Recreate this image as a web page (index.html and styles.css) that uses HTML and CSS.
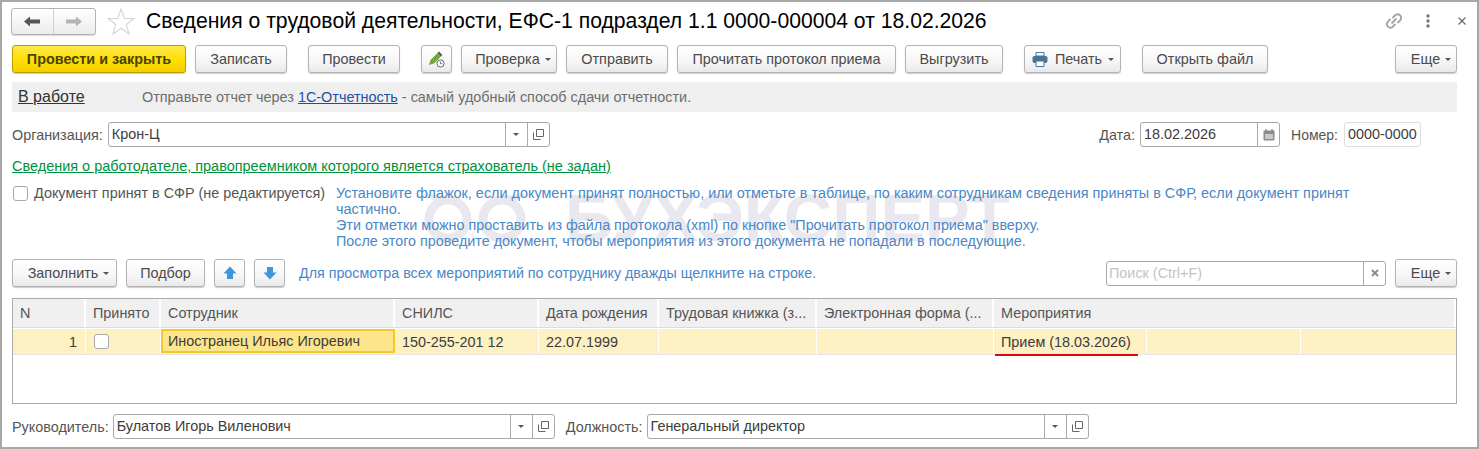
FILE: index.html
```html
<!DOCTYPE html>
<html lang="ru">
<head>
<meta charset="utf-8">
<title>ЕФС-1</title>
<link rel="stylesheet" href="styles.css">
</head>
<body>
<div class="frame">
  <div class="watermark" aria-hidden="true">
    <svg class="wm-logo" width="110" height="56" viewBox="0 0 110 56"><circle cx="28" cy="29" r="19" fill="none" stroke="#e8e8ee" stroke-width="9"/><circle cx="82" cy="29" r="19" fill="none" stroke="#e8e8ee" stroke-width="9"/><path d="M4 4 L30 6 L20 15 Z M106 4 L80 6 L90 15 Z" fill="#e8e8ee"/></svg>
    <span>БУХЭКСПЕРТ</span>
  </div>

  <header class="title-row">
    <div class="nav-group">
      <button class="nav-btn"><svg width="17" height="11" viewBox="0 0 17 11"><path d="M0 5.5 L6 0.5 V3.5 H16 V7.5 H6 V10.5 Z" fill="#555"/></svg></button>
      <button class="nav-btn"><svg width="17" height="11" viewBox="0 0 17 11"><path d="M16 5.5 L10 0.5 V3.5 H0 V7.5 H10 V10.5 Z" fill="#b5b5b5"/></svg></button>
    </div>
    <svg class="star" width="28" height="27" viewBox="0 0 28 27"><path d="M14 1 L17.3 10.4 L27 10.6 L19.2 16.5 L22 26 L14 20.3 L6 26 L8.8 16.5 L1 10.6 L10.7 10.4 Z" fill="#fff" stroke="#d4d8da" stroke-width="1.2"/></svg>
    <h1 class="title">Сведения о трудовой деятельности, ЕФС-1 подраздел 1.1 0000-000004 от 18.02.2026</h1>
    <div class="win-tools">
      <svg width="20" height="20" viewBox="0 0 20 20" fill="none" stroke="#a4a4a4" stroke-width="1.8"><path d="M8.5 7 L11.5 4 a3.6 3.6 0 0 1 5 5 L13.5 12"/><path d="M11.5 13 L8.5 16 a3.6 3.6 0 0 1 -5 -5 L6.5 8"/><path d="M7.5 12.5 L12.5 7.5"/></svg>
      <svg class="dots" width="6" height="14" viewBox="0 0 6 14"><circle cx="3" cy="2" r="1.7" fill="#777"/><circle cx="3" cy="7" r="1.7" fill="#777"/><circle cx="3" cy="12" r="1.7" fill="#777"/></svg>
      <svg class="close" width="8" height="8" viewBox="0 0 8 8"><path d="M0.5 0.5 L7.5 7.5 M7.5 0.5 L0.5 7.5" stroke="#666" stroke-width="1.1"/></svg>
    </div>
  </header>

  <div class="toolbar main-bar">
    <button class="btn primary w-post-close">Провести и закрыть</button>
    <button class="btn w-save">Записать</button>
    <button class="btn w-save sep">Провести</button>
    <button class="btn icon sep">
      <svg width="17" height="17" viewBox="0 0 17 17"><path d="M1 14 L2.5 9 L9.5 2 L13 5.5 L6 12.5 Z" fill="#6fa83a"/><path d="M9.5 2 L11 .6 L14.4 4 L13 5.5 Z" fill="#555"/><circle cx="12.5" cy="12.5" r="3.6" fill="#fff" stroke="#667" stroke-width="1"/><path d="M12.5 10.5 V12.7 H14.3" stroke="#667" fill="none" stroke-width=".9"/></svg>
    </button>
    <button class="btn w-check">Проверка<i class="caret"></i></button>
    <button class="btn w-send">Отправить</button>
    <button class="btn w-read">Прочитать протокол приема</button>
    <button class="btn w-export">Выгрузить</button>
    <button class="btn w-print sep">
      <svg class="print-ico" width="16" height="15" viewBox="0 0 16 15"><path d="M4 0.5 H12 V4 H4 Z" fill="#fff" stroke="#4a7396"/><rect x="0.5" y="4" width="15" height="7" rx="2" fill="#4a7396"/><path d="M4 9 H12 V14.5 H4 Z" fill="#fff" stroke="#4a7396"/></svg>
      Печать<i class="caret"></i>
    </button>
    <button class="btn w-open sep">Открыть файл</button>
    <button class="btn w-more push">Еще<i class="caret"></i></button>
  </div>

  <div class="status-bar">
    <a class="status-link" href="#">В работе</a>
    <span class="status-note">Отправьте отчет через <a class="blue-link" href="#">1С-Отчетность</a> - самый удобный способ сдачи отчетности.</span>
  </div>

  <div class="field-row org-row">
    <label class="lbl">Организация:</label>
    <div class="field w-org"><span class="val">Крон-Ц</span><span class="cell"><i class="caret dark"></i></span><span class="cell"><svg class="open-ico" width="11" height="11" viewBox="0 0 11 11"><path d="M3.5 .5 H10.5 V7.5 H3.5 Z" fill="none" stroke="#666"/><path d="M.5 3.5 V10.5 H7.5" fill="none" stroke="#666"/></svg></span></div>
    <label class="lbl push">Дата:</label>
    <div class="field w-date"><span class="val">18.02.2026</span><span class="cell"><svg width="12" height="12" viewBox="0 0 12 12"><rect x=".5" y="1.5" width="11" height="10" rx="1" fill="#8b8b8b"/><rect x="2" y="5" width="8" height="5" fill="#c9c9c9"/><path d="M3 0 V2 M9 0 V2" stroke="#666"/></svg></span></div>
    <label class="lbl gap-num">Номер:</label>
    <div class="field w-num plain"><span class="val">0000-0000</span></div>
  </div>

  <a class="green-link" href="#">Сведения о работодателе, правопреемником которого является страхователь (не задан)</a>

  <div class="accept-row">
    <label class="check-label"><span class="check"></span>Документ принят в СФР (не редактируется)</label>
    <p class="hint"><span class="hint-lead">Установите флажок, если документ принят полностью, или отметьте в таблице, по каким сотрудникам сведения приняты в СФР, если документ принят частично.</span><br>Эти отметки можно проставить из файла протокола (xml) по кнопке "Прочитать протокол приема" вверху.<br>После этого проведите документ, чтобы мероприятия из этого документа не попадали в последующие.</p>
  </div>

  <div class="toolbar table-bar">
    <button class="btn w-fill">Заполнить<i class="caret"></i></button>
    <button class="btn w-pick">Подбор</button>
    <button class="btn icon"><svg width="14" height="14" viewBox="0 0 14 14"><path d="M7 .5 L13.5 7.5 H10 V13 H4 V7.5 H.5 Z" fill="#3f96d8"/></svg></button>
    <button class="btn icon"><svg width="14" height="14" viewBox="0 0 14 14"><path d="M7 13.5 L13.5 6.5 H10 V1 H4 V6.5 H.5 Z" fill="#3f96d8"/></svg></button>
    <span class="table-hint">Для просмотра всех мероприятий по сотруднику дважды щелкните на строке.</span>
    <div class="field w-search"><span class="val placeholder">Поиск (Ctrl+F)</span><span class="cell"><svg width="8" height="8" viewBox="0 0 8 8"><path d="M1 1 L7 7 M7 1 L1 7" stroke="#8a8a8a" stroke-width="1.8"/></svg></span></div>
    <button class="btn w-more">Еще<i class="caret"></i></button>
  </div>

  <div class="grid">
    <div class="grid-row head">
      <div class="c c-n">N</div>
      <div class="c c-acc">Принято</div>
      <div class="c c-emp">Сотрудник</div>
      <div class="c c-snils">СНИЛС</div>
      <div class="c c-dob">Дата рождения</div>
      <div class="c c-book">Трудовая книжка (з...</div>
      <div class="c c-el">Электронная форма (...</div>
      <div class="c c-ev">Мероприятия</div>
    </div>
    <div class="grid-row data">
      <div class="c c-n num">1</div>
      <div class="c c-acc"><span class="check"></span></div>
      <div class="c c-emp current">Иностранец Ильяс Игоревич</div>
      <div class="c c-snils">150-255-201 12</div>
      <div class="c c-dob">22.07.1999</div>
      <div class="c c-book"></div>
      <div class="c c-el"></div>
      <div class="c c-ev1"><span class="ev-text">Прием (18.03.2026)</span></div>
      <div class="c c-ev2"></div>
      <div class="c c-ev3"></div>
    </div>
  </div>

  <div class="field-row bottom-row">
    <label class="lbl">Руководитель:</label>
    <div class="field w-head"><span class="val">Булатов Игорь Виленович</span><span class="cell"><i class="caret dark"></i></span><span class="cell"><svg class="open-ico" width="11" height="11" viewBox="0 0 11 11"><path d="M3.5 .5 H10.5 V7.5 H3.5 Z" fill="none" stroke="#666"/><path d="M.5 3.5 V10.5 H7.5" fill="none" stroke="#666"/></svg></span></div>
    <label class="lbl gap-pos">Должность:</label>
    <div class="field w-pos"><span class="val">Генеральный директор</span><span class="cell"><i class="caret dark"></i></span><span class="cell"><svg class="open-ico" width="11" height="11" viewBox="0 0 11 11"><path d="M3.5 .5 H10.5 V7.5 H3.5 Z" fill="none" stroke="#666"/><path d="M.5 3.5 V10.5 H7.5" fill="none" stroke="#666"/></svg></span></div>
  </div>
</div>
</body>
</html>
```

FILE: styles.css
```css
* { box-sizing: border-box; }
html, body { margin: 0; padding: 0; }
body {
  width: 1479px;
  height: 449px;
  overflow: hidden;
  background: #fff;
  font-family: "Liberation Sans", Arial, sans-serif;
  font-size: 14.4px;
  color: #4a4a4a;
}
.frame {
  position: relative;
  width: 1479px;
  height: 449px;
  border: 2px solid #a8a8a8;
  padding: 0 20px 0 10px;
  isolation: isolate;
}
.watermark {
  position: absolute;
  left: 418px;
  top: 188px;
  z-index: -1;
  display: flex;
  align-items: flex-end;
  gap: 35px;
  font-size: 67px;
  line-height: 56px;
  font-weight: 700;
  color: #e8e8ee;
  white-space: nowrap;
}
.title-row { display: flex; align-items: center; height: 36px; padding-top: 2px; }
.nav-group {
  display: flex;
  width: 85px;
  height: 27px;
  border: 1px solid #b3b3b3;
  border-radius: 3px;
  background: linear-gradient(#fff, #ececec);
  box-shadow: 0 1px 1px rgba(0,0,0,.15);
  margin-left: -1px;
}
.nav-btn {
  flex: 1;
  display: flex;
  align-items: center;
  justify-content: center;
  border: 0;
  padding: 0;
  background: none;
}
.nav-btn + .nav-btn { border-left: 1px solid #cfcfcf; }
.star { margin-left: 11px; }
.title { margin: 0 0 0 11px; font-size: 21.17px; font-weight: 400; color: #000; white-space: nowrap; }
.win-tools { margin-left: auto; margin-right: -9px; display: flex; align-items: center; }
.dots { margin-left: 21px; }
.close { margin-left: 27px; }

.toolbar { display: flex; align-items: center; }
.main-bar { height: 28px; margin-top: 7px; gap: 9px; }
.table-bar { height: 28px; margin-top: 10px; gap: 9px; }
.push { margin-left: auto; }
.sep { margin-left: 12px; }

.btn {
  height: 28px;
  padding: 0;
  display: inline-flex;
  align-items: center;
  justify-content: center;
  gap: 5px;
  border: 1px solid #b3b3b3;
  border-radius: 3px;
  background: linear-gradient(#fff 0%, #f6f6f6 60%, #e9e9e9 100%);
  box-shadow: 0 1px 1px rgba(0,0,0,.2);
  font: 14.4px "Liberation Sans", Arial, sans-serif;
  color: #4a4a4a;
  white-space: nowrap;
}
.btn.primary {
  background: linear-gradient(#ffe94d 0%, #ffdf00 55%, #f1d000 100%);
  border-color: #b9a000;
  color: #4b4300;
  font-weight: 700;
}
.icon { width: 31px; }
.w-post-close { width: 174px; }
.w-save { width: 92px; }
.w-check { width: 96px; padding-left: 8px; gap: 4px; }
.w-send { width: 102px; }
.w-read { width: 219px; }
.w-export { width: 98px; }
.w-print { width: 97px; padding-left: 1px; }
.print-ico { margin-right: 2px; }
.w-open { width: 126px; }
.w-more { width: 62px; padding-left: 10px; gap: 4px; }
.w-fill { width: 105px; padding-left: 8px; gap: 4px; }
.w-pick { width: 79px; }
.caret {
  display: inline-block;
  width: 0;
  height: 0;
  margin-left: 1px;
  border-left: 3px solid transparent;
  border-right: 3px solid transparent;
  border-top: 3px solid #555;
}
.caret.dark { margin: 0; }

.status-bar {
  display: flex;
  align-items: center;
  height: 30px;
  margin-top: 9px;
  background: #efefef;
  padding-left: 6px;
}
.status-link { font-size: 16px; color: #333; text-decoration: underline; width: 124px; flex: none; }
.status-note { font-size: 14.42px; color: #6d6d6d; }
.blue-link { color: #1c50a6; text-decoration: underline; }

.field-row { display: flex; align-items: center; height: 25px; }
.org-row { margin-top: 10px; }
.lbl { color: #555; font-size: 14.4px; white-space: nowrap; }
.field {
  display: flex;
  height: 25px;
  align-items: stretch;
  border: 1px solid #a9a9a9;
  border-radius: 3px;
  background: #fff;
  margin-left: 5px;
}
.val { flex: 1; padding: 0 3px; line-height: 23px; color: #3c3c3c; white-space: nowrap; overflow: hidden; }
.placeholder { color: #c4c4c4; padding-left: 2px; }
.cell {
  width: 22px;
  display: flex;
  align-items: center;
  justify-content: center;
  border-left: 1px solid #a9a9a9;
}
.w-org { width: 442px; }
.w-date { width: 140px; }
.w-num { width: 77px; margin-left: 6px; margin-right: 36px; }
.plain { border-color: #dcdcdc; }
.lbl.gap-num { margin-left: 11px; font-size: 14px; }

.green-link {
  display: block;
  width: fit-content;
  margin-top: 11px;
  color: #00913c;
  font-size: 14.47px;
  line-height: 17px;
  text-decoration: underline;
}

.accept-row { display: flex; margin-top: 10px; line-height: 16px; }
.check-label { display: flex; align-items: flex-start; width: 324px; font-size: 14.4px; color: #555; white-space: nowrap; flex: none; }
.check {
  display: inline-block;
  flex: none;
  width: 15px;
  height: 15px;
  border: 1px solid #a9a9a9;
  border-radius: 3px;
  background: #fff;
  margin-right: 6px;
}
.check-label .check { margin-left: 1px; margin-top: 1px; }
.hint { margin: 0; width: 1020px; color: #4a87c7; font-size: 14.35px; line-height: 16px; }
.hint-lead { font-size: 14.42px; }

.table-hint { color: #4a87c7; font-size: 14.27px; margin-left: 5px; margin-right: auto; white-space: nowrap; }
.w-search { width: 280px; margin-left: 0; }

.grid {
  margin-top: 11px;
  width: 1445px;
  height: 106px;
  border: 1px solid #a9a9a9;
}
.grid-row { display: flex; }
.grid-row.head { height: 29px; background: #f0f0f0; border-bottom: 1px solid #dcdcdc; }
.grid-row.data { height: 26px; margin-top: 1px; background: #fdf1c4; border-bottom: 1px solid #e6e6e6; }
.c {
  flex: none;
  display: flex;
  align-items: center;
  padding: 0 7px;
  border-right: 1px solid #fff;
  white-space: nowrap;
  color: #555;
  font-size: 14.4px;
  height: 100%;
}
.grid-row.head .c { border-right: 2px solid #fff; }
.data .c { color: #3c3c3c; }
.c-n { width: 73px; }
.num { justify-content: flex-end; padding-right: 8px; }
.c-acc { width: 75px; }
.c-acc .check { margin: 0 0 0 1px; }
.c-emp { width: 234px; }
.data .current {
  background: #fde58b;
  border: 2px solid #f6c827;
  height: 24px;
  padding-left: 5px;
}
.c-snils { width: 144px; }
.c-dob { width: 120px; }
.c-book { width: 158px; }
.c-el { width: 177px; }
.c-ev { flex: 1; border-right: 0; }
.c-ev1 { width: 153px; position: relative; }
.c-ev2 { width: 154px; }
.c-ev3 { flex: 1; border-right: 0; }
.ev-text::after {
  content: "";
  position: absolute;
  left: 1px;
  right: 8px;
  bottom: -2px;
  height: 2px;
  background: #e0060a;
}

.bottom-row { margin-top: 10px; }
.bottom-row .field { margin-left: 4px; }
.w-head { width: 442px; }
.gap-pos { margin-left: 11px; }
.w-pos { width: 442px; }
```
